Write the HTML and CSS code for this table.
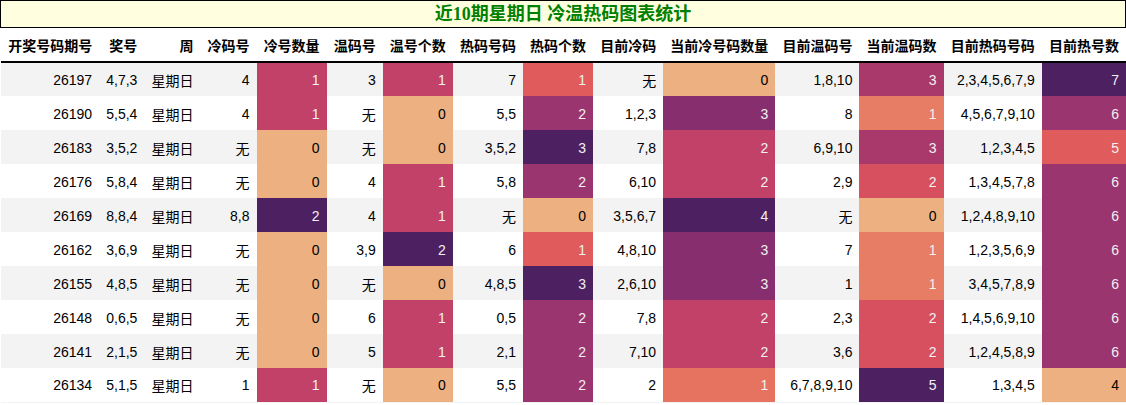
FILE: index.html
```html
<!DOCTYPE html>
<html lang="zh">
<head>
<meta charset="utf-8">
<title>近10期星期日 冷温热码图表统计</title>
<link rel="stylesheet" href="styles.css">
</head>
<body>
<div class="title">近10期星期日 冷温热码图表统计</div>
<table class="stats">
<thead>
<tr>
<th>开奖号码期号</th><th>奖号</th><th>周</th><th>冷码号</th><th>冷号数量</th><th>温码号</th><th>温号个数</th><th>热码号码</th><th>热码个数</th><th>目前冷码</th><th>当前冷号码数量</th><th>目前温码号</th><th>当前温码数</th><th>目前热码号码</th><th>目前热号数</th>
</tr>
</thead>
<tbody>
<tr><td>26197</td><td>4,7,3</td><td>星期日</td><td>4</td><td class="c50">1</td><td>3</td><td class="c50">1</td><td>7</td><td class="c33">1</td><td>无</td><td class="c0">0</td><td>1,8,10</td><td class="c60">3</td><td>2,3,4,5,6,7,9</td><td class="c100">7</td></tr>
<tr><td>26190</td><td>5,5,4</td><td>星期日</td><td>4</td><td class="c50">1</td><td>无</td><td class="c0">0</td><td>5,5</td><td class="c67">2</td><td>1,2,3</td><td class="c75">3</td><td>8</td><td class="c20">1</td><td>4,5,6,7,9,10</td><td class="c67">6</td></tr>
<tr><td>26183</td><td>3,5,2</td><td>星期日</td><td>无</td><td class="c0">0</td><td>无</td><td class="c0">0</td><td>3,5,2</td><td class="c100">3</td><td>7,8</td><td class="c50">2</td><td>6,9,10</td><td class="c60">3</td><td>1,2,3,4,5</td><td class="c33">5</td></tr>
<tr><td>26176</td><td>5,8,4</td><td>星期日</td><td>无</td><td class="c0">0</td><td>4</td><td class="c50">1</td><td>5,8</td><td class="c67">2</td><td>6,10</td><td class="c50">2</td><td>2,9</td><td class="c40">2</td><td>1,3,4,5,7,8</td><td class="c67">6</td></tr>
<tr><td>26169</td><td>8,8,4</td><td>星期日</td><td>8,8</td><td class="c100">2</td><td>4</td><td class="c50">1</td><td>无</td><td class="c0">0</td><td>3,5,6,7</td><td class="c100">4</td><td>无</td><td class="c0">0</td><td>1,2,4,8,9,10</td><td class="c67">6</td></tr>
<tr><td>26162</td><td>3,6,9</td><td>星期日</td><td>无</td><td class="c0">0</td><td>3,9</td><td class="c100">2</td><td>6</td><td class="c33">1</td><td>4,8,10</td><td class="c75">3</td><td>7</td><td class="c20">1</td><td>1,2,3,5,6,9</td><td class="c67">6</td></tr>
<tr><td>26155</td><td>4,8,5</td><td>星期日</td><td>无</td><td class="c0">0</td><td>无</td><td class="c0">0</td><td>4,8,5</td><td class="c100">3</td><td>2,6,10</td><td class="c75">3</td><td>1</td><td class="c20">1</td><td>3,4,5,7,8,9</td><td class="c67">6</td></tr>
<tr><td>26148</td><td>0,6,5</td><td>星期日</td><td>无</td><td class="c0">0</td><td>6</td><td class="c50">1</td><td>0,5</td><td class="c67">2</td><td>7,8</td><td class="c50">2</td><td>2,3</td><td class="c40">2</td><td>1,4,5,6,9,10</td><td class="c67">6</td></tr>
<tr><td>26141</td><td>2,1,5</td><td>星期日</td><td>无</td><td class="c0">0</td><td>5</td><td class="c50">1</td><td>2,1</td><td class="c67">2</td><td>7,10</td><td class="c50">2</td><td>3,6</td><td class="c40">2</td><td>1,2,4,5,8,9</td><td class="c67">6</td></tr>
<tr><td>26134</td><td>5,1,5</td><td>星期日</td><td>1</td><td class="c50">1</td><td>无</td><td class="c0">0</td><td>5,5</td><td class="c67">2</td><td>2</td><td class="c25">1</td><td>6,7,8,9,10</td><td class="c100">5</td><td>1,3,4,5</td><td class="c0">4</td></tr>
</tbody>
</table>
</body>
</html>
```

FILE: styles.css
```css
html, body {
  margin: 0;
  padding: 0;
  background: #ffffff;
}

.title {
  box-sizing: border-box;
  height: 28px;
  border: 1px solid #000000;
  background: #ffffe0;
  color: #008000;
  font-family: "Liberation Serif", "Noto Sans CJK SC", serif;
  font-weight: bold;
  font-size: 18px;
  line-height: 26px;
  text-align: center;
}

.stats {
  width: calc(100% - 1px);
  border-collapse: collapse;
  border-spacing: 0;
  margin-left: 1px;
  font-family: "Liberation Sans", "Noto Sans CJK SC", sans-serif;
  font-size: 14px;
  color: #000000;
  border-bottom: 1px solid #f3f3f3;
}

.stats th {
  height: 34px;
  padding: 0 7px;
  text-align: right;
  font-weight: bold;
  white-space: nowrap;
  border-bottom: 2px solid #000000;
  box-sizing: border-box;
}

.stats td {
  height: 34px;
  padding: 1px 7px 0;
  text-align: right;
  white-space: nowrap;
  box-sizing: border-box;
}

.stats tbody tr:nth-child(odd) {
  background: #f3f3f3;
}

.stats tbody tr:nth-child(even) {
  background: #ffffff;
}

.stats td.c0 { background: #edb081; color: #000000; }
.stats td.c20 { background: #e67d64; color: #f1f1f1; }
.stats td.c25 { background: #e57360; color: #f1f1f1; }
.stats td.c33 { background: #e05c5c; color: #f1f1f1; }
.stats td.c40 { background: #d65060; color: #f1f1f1; }
.stats td.c50 { background: #c24169; color: #f1f1f1; }
.stats td.c60 { background: #a9386b; color: #f1f1f1; }
.stats td.c67 { background: #9a3570; color: #f1f1f1; }
.stats td.c75 { background: #872e6f; color: #f1f1f1; }
.stats td.c100 { background: #4d2161; color: #f1f1f1; }
```
